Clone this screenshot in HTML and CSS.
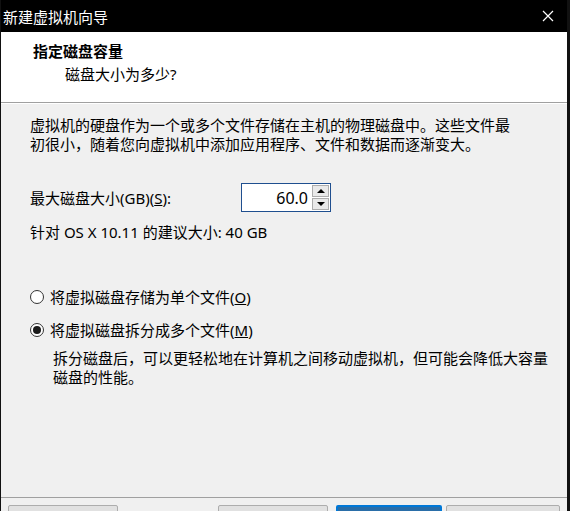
FILE: index.html
```html
<!DOCTYPE html>
<html lang="zh-CN">
<head>
    <meta charset="UTF-8">
    <title>新建虚拟机向导</title>
    <link rel="stylesheet" href="styles.css">
</head>
<body>
    <div id="wizard">
        <div class="titlebar">
            <span class="title">新建虚拟机向导</span>
            <span class="close">
                <svg width="12" height="12" viewBox="0 0 12 12">
                    <path d="M1 1L11 11M11 1L1 11" stroke="#fff" stroke-width="1.2" fill="none"/>
                </svg>
            </span>
        </div>

        <div class="header">
            <div class="heading">指定磁盘容量</div>
            <div class="subheading">磁盘大小为多少?</div>
        </div>

        <div class="content">
            <p class="intro">虚拟机的硬盘作为一个或多个文件存储在主机的物理磁盘中。这些文件最<br>初很小，随着您向虚拟机中添加应用程序、文件和数据而逐渐变大。</p>

            <div class="size-row">
                <label class="size-label">最大磁盘大小(GB)(<u>S</u>):</label>
                <div class="spinbox">
                    <span class="value">60.0</span>
                    <div class="spin">
                        <span class="spin-btn"><i class="arrow up"></i></span>
                        <span class="spin-btn"><i class="arrow down"></i></span>
                    </div>
                </div>
            </div>

            <p class="hint">针对 OS X 10.11 的建议大小: 40 GB</p>

            <div class="radio first">
                <span class="dot"></span>
                <span>将虚拟磁盘存储为单个文件(<u>O</u>)</span>
            </div>
            <div class="radio">
                <span class="dot checked"></span>
                <span>将虚拟磁盘拆分成多个文件(<u>M</u>)</span>
            </div>
            <p class="note">拆分磁盘后，可以更轻松地在计算机之间移动虚拟机，但可能会降低大容量<br>磁盘的性能。</p>
        </div>

        <div class="footer">
            <button class="b1"></button>
            <button class="b2"></button>
            <button class="b3 default"></button>
            <button class="b4"></button>
        </div>
    </div>
</body>
</html>
```

FILE: styles.css
```css
body {
    margin: 0;
    font-family: "Noto Sans", "Noto Sans CJK SC", sans-serif;
    font-size: 15px;
    background-color: #f0f0f0;
}
#wizard {
    width: 570px;
    height: 511px;
    box-sizing: border-box;
    border-left: 1px solid #111;
    border-right: 3px solid #111;
    display: flex;
    flex-direction: column;
    overflow: hidden;
}
.titlebar {
    height: 32px;
    background-color: #000;
    color: #fff;
    display: flex;
    align-items: center;
    justify-content: space-between;
    padding-left: 2px;
    flex-shrink: 0;
}
.close {
    width: 38px;
    height: 32px;
    display: flex;
    align-items: center;
    justify-content: center;
}
.header {
    height: 71px;
    background-color: #fff;
    border-bottom: 1px solid #a0a0a0;
    padding: 9px 0 0 32px;
    box-sizing: border-box;
    flex-shrink: 0;
}
.heading {
    font-weight: bold;
    line-height: 20px;
}
.subheading {
    line-height: 20px;
    margin-top: 3px;
    padding-left: 32px;
}
.content {
    flex: 1;
    padding: 12px 0 0 29px;
    border-top: 1px solid #fff;
}
p {
    margin: 0;
}
.intro {
    line-height: 19px;
}
.size-row {
    display: flex;
    align-items: center;
    margin-top: 29px;
    height: 29px;
}
.size-label {
    width: 211px;
}
.spinbox {
    width: 90px;
    height: 29px;
    box-sizing: border-box;
    border: 1px solid #1f4f8f;
    background-color: #fff;
    display: flex;
    align-items: center;
    justify-content: flex-end;
    padding-right: 1px;
}
.value {
    font-size: 16px;
    margin-right: 4px;
}
.spin {
    display: flex;
    flex-direction: column;
    gap: 1px;
}
.spin-btn {
    width: 17px;
    height: 12px;
    box-sizing: border-box;
    border: 1px solid #adadad;
    background-color: #e9e9e9;
    display: flex;
    align-items: center;
    justify-content: center;
}
.arrow {
    width: 0;
    height: 0;
    border-left: 4px solid transparent;
    border-right: 4px solid transparent;
}
.arrow.up {
    border-bottom: 4px solid #000;
}
.arrow.down {
    border-top: 4px solid #000;
}
.hint {
    margin-top: 11px;
    line-height: 18px;
}
.radio {
    display: flex;
    align-items: center;
    line-height: 18px;
    margin-top: 15px;
}
.radio.first {
    margin-top: 47px;
}
.dot {
    width: 14px;
    height: 14px;
    box-sizing: border-box;
    border: 1px solid #333;
    border-radius: 50%;
    background-color: #fff;
    margin-right: 6px;
    display: flex;
    align-items: center;
    justify-content: center;
}
.dot.checked::after {
    content: "";
    width: 8px;
    height: 8px;
    border-radius: 50%;
    background-color: #1a1a1a;
}
.note {
    margin-top: 10px;
    padding-left: 23px;
    line-height: 19px;
}
.footer {
    height: 14px;
    flex-shrink: 0;
    border-top: 1px solid #a0a0a0;
    display: flex;
    align-items: flex-start;
    padding-top: 7px;
    box-sizing: border-box;
}
button {
    height: 26px;
    border: 1px solid #adadad;
    background-color: #e1e1e1;
    border-radius: 2px;
    padding: 0;
}
.b1 {
    width: 110px;
    margin-left: 7px;
}
.b2 {
    width: 110px;
    margin-left: 100px;
}
.b3 {
    width: 106px;
    margin-left: 8px;
}
.b4 {
    width: 114px;
    margin-left: 4px;
}
button.default {
    border: 2px solid #0078d7;
    background-color: #2a6ea8;
}
```
